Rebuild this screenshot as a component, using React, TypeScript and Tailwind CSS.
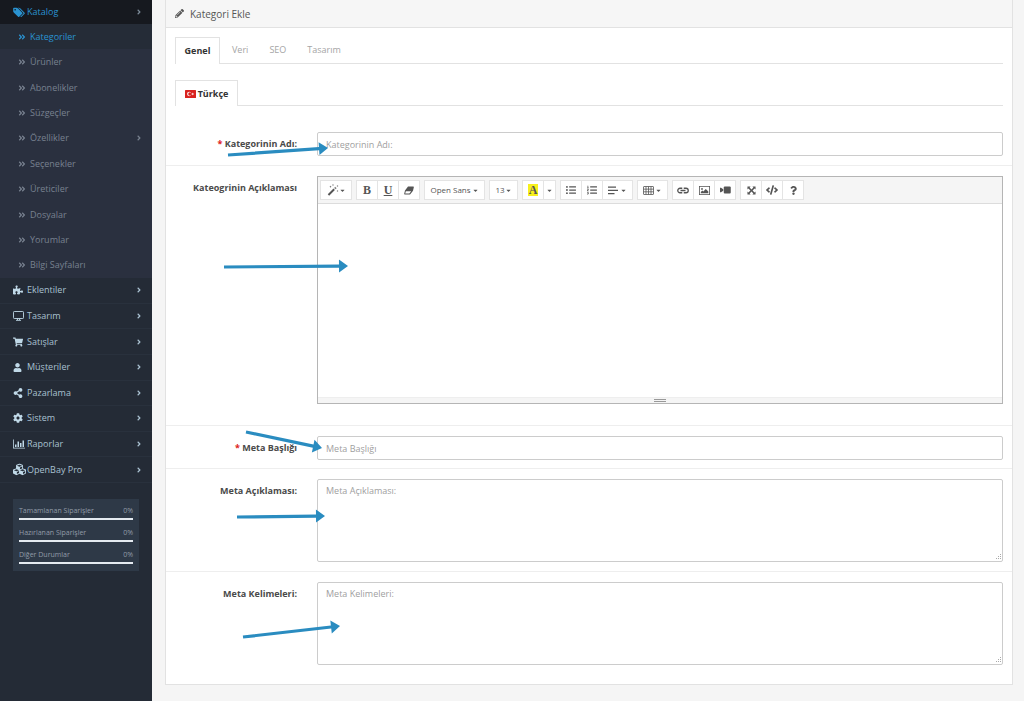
import React from 'react';
import {
  FaAngleDoubleRight,
  FaAngleRight,
  FaCaretDown,
  FaCode,
  FaCog,
  FaCubes,
  FaListOl,
  FaListUl,
  FaPencilAlt,
  FaPuzzlePiece,
  FaQuestion,
  FaShareAlt,
  FaShoppingCart,
  FaUser,
} from 'react-icons/fa';

const TagsIcon = () => (
  <svg viewBox="0 0 1899 1792" className="h-[11px] w-3" fill="currentColor">
    <path d="M448 448q0-53-37.5-90.5T320 320t-90.5 37.5T192 448t37.5 90.5T320 576t90.5-37.5T448 448zm1067 576q0 53-37 90l-491 492q-39 37-91 37-53 0-90-37L91 890q-38-37-64.5-101T0 672V256q0-52 38-90t90-38h416q53 0 117 26.5T763 219l715 714q37 39 37 91zm384 0q0 53-37 90l-491 492q-39 37-91 37-36 0-59-14t-53-45l470-470q37-37 37-90 0-52-37-91L923 219q-38-38-102-64.5T704 128h224q53 0 117 26.5t102 64.5l715 714q37 39 37 91z" />
  </svg>
);

const DesktopIcon = () => (
  <svg viewBox="0 0 22 20" className="h-[10px] w-[11px]" fill="none" stroke="currentColor" strokeWidth="1.8">
    <rect x="1" y="1" width="20" height="14" rx="1.5" />
    <path d="M9 15v3M13 15v3M6 18.7h10" />
  </svg>
);

const ChartIcon = () => (
  <svg viewBox="0 0 24 20" className="h-[10px] w-3" fill="currentColor">
    <path d="M0 1h1.6v16.4H24V19H0zM4 11h3v5H4zM9 5h3v11H9zM14 8h3v8h-3zM19 3h3v13h-3z" />
  </svg>
);

const MagicIcon = () => (
  <svg viewBox="0 0 24 24" className="h-3 w-3" fill="currentColor">
    <path d="M1.500 20.500L13 9l2.800 2.800L4.300 23.300z" />
    <path d="M14.200 7.800L16.500 5.500l2.800 2.800L17 10.600z" opacity=".75" />
    <path d="M7 3l.7 1.800 1.800.7-1.800.7L7 8l-.7-1.800-1.800-.7 1.800-.7zM12 0l.6 1.400L14 2l-1.400.6L12 4l-.6-1.400L10 2l1.400-.6zM21 2l.6 1.400 1.400.6-1.400.6L21 6l-.6-1.400L19 4l1.400-.6zM21 12l.6 1.400 1.400.6-1.400.6L21 16l-.6-1.400L19 14l1.400-.6z" />
  </svg>
);

const EraserIcon = () => (
  <svg viewBox="0 0 20 18" className="h-[9px] w-[10px]" fill="currentColor">
    <path fillRule="evenodd" d="M8 1h10.500q1.500 0 1.200 1.500L18 9.500 12.500 16.500q-.5.500-1.500.500H1.500Q0 17 .4 15.500L2 9zM3.700 10.500L2.400 15.200h8.300l3.700-4.700z" />
  </svg>
);

const LinkIcon = () => (
  <svg viewBox="0 0 24 14" className="h-[7px] w-3" fill="none" stroke="currentColor" strokeWidth="2.600">
    <path d="M10.500 11.500H6a4.500 4.500 0 0 1 0-9h4.500M13.500 2.500H18a4.500 4.500 0 0 1 0 9h-4.500M7 7h10" />
  </svg>
);

const VideoIcon = () => (
  <svg viewBox="0 0 22 16" className="h-2 w-[11px]" fill="currentColor">
    <rect x="7.500" y="1" width="14" height="14" rx="2" />
    <path d="M0 3.500h2l4.500 3v3l-4.500 3H0z" />
  </svg>
);

const AlignIcon = () => (
  <svg viewBox="0 0 20 18" className="h-[9px] w-[10px]" fill="currentColor">
    <path d="M0 1h16v2.4H0zM0 7.5h20v2.4H0zM0 14h13v2.4H0z" />
  </svg>
);

const TableIcon = () => (
  <svg viewBox="0 0 22 18" className="h-[9px] w-[11px]" fill="none" stroke="currentColor" strokeWidth="1.6">
    <rect x="1" y="1" width="20" height="16" rx="1" />
    <path d="M1 6.3h20M1 11.6h20M6 1v16M11 1v16M16 1v16" />
  </svg>
);

const PictureIcon = () => (
  <svg viewBox="0 0 22 18" className="h-[9px] w-[11px]" fill="currentColor">
    <path fillRule="evenodd" d="M0 0h22v18H0zM1.6 1.6v14.8h18.8V1.6z" />
    <circle cx="6" cy="5.8" r="1.9" />
    <path d="M3.6 14.5v-2.6l3-3 2 2 5-5 5 5v3.6z" />
  </svg>
);

const ExpandIcon = () => (
  <svg viewBox="0 0 20 20" className="h-[9px] w-[9px]" fill="currentColor">
    <path d="M1 1h7L5.8 3.2 10 7.6l4.2-4.4L12 1h7v7l-2.2-2.2L12.4 10l4.4 4.2L19 12v7h-7l2.2-2.2L10 12.4l-4.2 4.4L8 19H1v-7l2.2 2.2L7.6 10 3.2 5.8 1 8z" />
  </svg>
);

const FlagIcon = () => (
  <svg viewBox="0 0 22 16" className="h-2 w-[11px]">
    <rect width="22" height="16" rx="1" fill="#d9221f" />
    <circle cx="8.5" cy="8" r="4.3" fill="#fff" />
    <circle cx="9.8" cy="8" r="3.4" fill="#d9221f" />
    <path d="M12 8l2.2-.7V5l1.4 1.9 2.2-.7L16.4 8l1.4 1.8-2.2-.7L14.2 11V8.7z" fill="#fff" />
  </svg>
);

const subItems = [
  { label: 'Kategoriler', active: true },
  { label: 'Ürünler' },
  { label: 'Abonelikler' },
  { label: 'Süzgeçler' },
  { label: 'Özellikler', more: true },
  { label: 'Seçenekler' },
  { label: 'Üreticiler' },
  { label: 'Dosyalar' },
  { label: 'Yorumlar' },
  { label: 'Bilgi Sayfaları' },
];

const menuItems = [
  { label: 'Eklentiler', icon: <FaPuzzlePiece size={10} /> },
  { label: 'Tasarım', icon: <DesktopIcon /> },
  { label: 'Satışlar', icon: <FaShoppingCart size={10} /> },
  { label: 'Müşteriler', icon: <FaUser size={9} /> },
  { label: 'Pazarlama', icon: <FaShareAlt size={10} /> },
  { label: 'Sistem', icon: <FaCog size={10} /> },
  { label: 'Raporlar', icon: <ChartIcon /> },
  { label: 'OpenBay Pro', icon: <FaCubes size={13} /> },
];

const stats = ['Tamamlanan Siparişler', 'Hazırlanan Siparişler', 'Diğer Durumlar'];

const Sidebar = () => (
  <aside className="w-[152px] shrink-0 bg-[#242b36] text-[9px] leading-3">
    <nav>
      <a href="#katalog" className="flex h-6 items-center bg-[#16191f] pl-[13px] pr-[9px] text-[#2a93d1]">
        <span className="w-[14px]">
          <TagsIcon />
        </span>
        <span className="grow">Katalog</span>
        <FaAngleRight size={8} className="text-[#7c8b99]" />
      </a>
      <ul className="flex h-[254px] flex-col bg-[#2a303f]">
        {subItems.map((item) => (
          <li key={item.label} className="flex-1">
            <a
              href="#"
              className={`flex h-full items-center pl-[18px] pr-[9px] ${
                item.active ? 'bg-[#252c37] text-[#2a93d1]' : 'text-[#78818f]'
              }`}
            >
              <FaAngleDoubleRight size={8} className="mr-1 w-2" />
              <span className="grow">{item.label}</span>
              {item.more && <FaAngleRight size={8} />}
            </a>
          </li>
        ))}
      </ul>
      <ul className="flex h-[205px] flex-col">
        {menuItems.map((item) => (
          <li key={item.label} className="flex-1 border-b border-[#29313d]">
            <a href="#" className="flex h-full items-center pl-[13px] pr-[9px] text-[#a9c1d1]">
              <span className="w-[14px] text-[#c0d9e8]">{item.icon}</span>
              <span className="grow">{item.label}</span>
              <FaAngleRight size={8} />
            </a>
          </li>
        ))}
      </ul>
    </nav>
    <div className="mx-[13px] mt-4 h-[72px] bg-[#2e3947] px-[6px] pt-[6px] text-[7px] text-[#929ca8]">
      {stats.map((label) => (
        <div key={label} className="h-[22px]">
          <div className="flex justify-between">
            <span>{label}</span>
            <span>0%</span>
          </div>
          <div className="mt-px h-[2px] bg-[#e4eaf0]" />
        </div>
      ))}
    </div>
  </aside>
);

type ToolProps = { title: string; className: string; children: React.ReactNode };

const Tool = ({ title, className, children }: ToolProps) => (
  <button
    type="button"
    title={title}
    className={`flex h-full items-center justify-center border-r border-[#e4e4e4] last:border-r-0 ${className}`}
  >
    {children}
  </button>
);

const Group = ({ children }: { children: React.ReactNode }) => (
  <div className="flex h-5 border border-[#e4e4e4] bg-white">{children}</div>
);

const Toolbar = () => (
  <div className="flex h-[27px] items-center gap-1 border-b border-[#dcdcdc] bg-[#f5f5f5] px-[2px] text-[8px] text-[#555]">
    <Group>
      <Tool title="Stil" className="w-[30px]">
        <MagicIcon />
        <FaCaretDown size={7} />
      </Tool>
    </Group>
    <Group>
      <Tool title="Kalın" className="w-[21px] font-['Liberation_Serif',serif] text-[12px] font-bold">B</Tool>
      <Tool title="Altı çizili" className="w-[21px] font-['Liberation_Serif',serif] text-[12px] font-bold underline">U</Tool>
      <Tool title="Temizle" className="w-5">
        <EraserIcon />
      </Tool>
    </Group>
    <Group>
      <Tool title="Yazı tipi" className="w-[59px] gap-px">
        Open Sans <FaCaretDown size={7} />
      </Tool>
    </Group>
    <Group>
      <Tool title="Yazı boyutu" className="w-[27px]">
        13
        <FaCaretDown size={7} />
      </Tool>
    </Group>
    <Group>
      <Tool title="Renk" className="w-[21px]">
        <span className="bg-[#f7f01c] px-px font-['Liberation_Serif',serif] text-[12px] font-bold leading-3">A</span>
      </Tool>
      <Tool title="Diğer renkler" className="w-[11px]">
        <FaCaretDown size={7} />
      </Tool>
    </Group>
    <Group>
      <Tool title="Madde listesi" className="w-[21px]">
        <FaListUl size={10} />
      </Tool>
      <Tool title="Numaralı liste" className="w-[21px]">
        <FaListOl size={10} />
      </Tool>
      <Tool title="Paragraf" className="w-[29px] gap-[2px]">
        <AlignIcon />
        <FaCaretDown size={7} />
      </Tool>
    </Group>
    <Group>
      <Tool title="Tablo" className="w-[29px] gap-px">
        <TableIcon />
        <FaCaretDown size={7} />
      </Tool>
    </Group>
    <Group>
      <Tool title="Bağlantı" className="w-[21px]">
        <LinkIcon />
      </Tool>
      <Tool title="Resim" className="w-[21px]">
        <PictureIcon />
      </Tool>
      <Tool title="Video" className="w-5">
        <VideoIcon />
      </Tool>
    </Group>
    <Group>
      <Tool title="Tam ekran" className="w-[21px]">
        <ExpandIcon />
      </Tool>
      <Tool title="Kod" className="w-[21px]">
        <FaCode size={12} />
      </Tool>
      <Tool title="Yardım" className="w-5">
        <FaQuestion size={9} />
      </Tool>
    </Group>
  </div>
);

type ArrowProps = { x1: number; y1: number; x2: number; y2: number };

// Points are relative to the top left corner of the form row.
const Arrow = ({ x1, y1, x2, y2 }: ArrowProps) => {
  const length = Math.hypot(x2 - x1, y2 - y1);
  const angle = (Math.atan2(y2 - y1, x2 - x1) * 180) / Math.PI;
  return (
    <svg className="pointer-events-none absolute left-0 top-0 z-10 h-px w-px overflow-visible" fill="#2a8cc0">
      <path
        transform={`translate(${x1} ${y1}) rotate(${angle})`}
        d={`M0-1.6H${length - 9}V-6.5L${length} 0L${length - 9} 6.5V1.6H0z`}
      />
    </svg>
  );
};

type RowProps = {
  id: string;
  label: string;
  required?: boolean;
  last?: boolean;
  arrow: ArrowProps;
  className?: string;
  children: React.ReactNode;
};

const FormRow = ({ id, label, required, last, arrow, className = '', children }: RowProps) => (
  <div className={`relative flex px-[9px] pt-[10px] ${last ? '' : 'border-b border-[#eee]'} ${className}`}>
    <label htmlFor={id} className="mr-5 w-[122px] shrink-0 pt-[6px] text-right font-bold text-[#4a4a4a]">
      {required && <span className="text-[#d22]">* </span>}
      {label}
    </label>
    <div className="min-w-0 grow">{children}</div>
    <Arrow {...arrow} />
  </div>
);

const fieldClass =
  'block w-full rounded-[2px] border border-[#ccc] bg-white px-2 text-[#555] outline-none placeholder:text-[#a0a0a0]';

const MetaArea = ({ id, placeholder }: { id: string; placeholder: string }) => (
  <div className="relative">
    <textarea id={id} placeholder={placeholder} className={`${fieldClass} h-[83px] resize-none pt-[5px]`} />
    <svg viewBox="0 0 6 6" className="absolute bottom-[2px] right-[2px] h-[6px] w-[6px]" fill="#aaa">
      <path d="M5 0h1v1H5zM3 2h1v1H3zM5 2h1v1H5zM1 4h1v1H1zM3 4h1v1H3zM5 4h1v1H5z" />
    </svg>
  </div>
);

export default function App() {
  return (
    <div className="flex min-h-screen bg-[#f5f5f5] font-['Open_Sans',sans-serif]">
      <Sidebar />
      <main className="min-w-0 grow pb-4 pl-[13px] pr-[11px]">
        <section className="border-x border-b border-[#e2e2e2] bg-white text-[9px] leading-3 text-[#444]">
          <h1 className="flex h-7 items-center gap-[6px] border-b border-[#e2e2e2] bg-[#f6f6f6] pl-[9px] text-[10px] text-[#555]">
            <FaPencilAlt size={9} />
            Kategori Ekle
          </h1>
          <div role="tablist" className="mx-[9px] mt-[9px] flex h-[27px] border-b border-[#e2e2e2]">
            <button type="button" role="tab" aria-selected="true" className="-mb-px w-[45px] border border-b-0 border-[#e2e2e2] bg-white font-bold text-[#333]">
              Genel
            </button>
            <button type="button" role="tab" className="ml-3 text-[#a5a5a5]">Veri</button>
            <button type="button" role="tab" className="ml-[21px] text-[#a5a5a5]">SEO</button>
            <button type="button" role="tab" className="ml-[21px] text-[#a5a5a5]">Tasarım</button>
          </div>
          <div role="tablist" className="mx-[9px] mt-4 flex h-[26px] border-b border-[#e2e2e2]">
            <button
              type="button"
              role="tab"
              aria-selected="true"
              className="-mb-px flex w-[63px] items-center justify-center gap-[2px] border border-b-0 border-[#e2e2e2] bg-white font-bold text-[#333]"
            >
              <FlagIcon />
              Türkçe
            </button>
          </div>
          <form className="pt-4">
            <FormRow id="name" label="Kategorinin Adı:" required arrow={{ x1: 62, y1: 33, x2: 162, y2: 26 }} className="h-[44px]">
              <input id="name" type="text" placeholder="Kategorinin Adı:" className={`${fieldClass} h-6`} />
            </FormRow>
            <FormRow id="description" label="Kateogrinin Açıklaması" arrow={{ x1: 58, y1: 101, x2: 182, y2: 100 }} className="h-[260px]">
              <div className="border border-[#b5b5b5]">
                <Toolbar />
                <textarea id="description" className="block h-[193px] w-full resize-none bg-white p-2 outline-none" />
                <div className="flex h-[6px] items-center justify-center border-t border-[#eee] bg-[#f5f5f5]">
                  <span className="h-[3px] w-3 border-y border-[#999]" />
                </div>
              </div>
            </FormRow>
            <FormRow id="meta-title" label="Meta Başlığı" required arrow={{ x1: 80, y1: 6, x2: 156, y2: 22 }} className="h-[43px]">
              <input id="meta-title" type="text" placeholder="Meta Başlığı" className={`${fieldClass} h-6`} />
            </FormRow>
            <FormRow id="meta-description" label="Meta Açıklaması:" arrow={{ x1: 71, y1: 48, x2: 159, y2: 47 }} className="h-[103px]">
              <MetaArea id="meta-description" placeholder="Meta Açıklaması:" />
            </FormRow>
            <FormRow id="meta-keywords" label="Meta Kelimeleri:" last arrow={{ x1: 77, y1: 65, x2: 174, y2: 54 }} className="h-[112px]">
              <MetaArea id="meta-keywords" placeholder="Meta Kelimeleri:" />
            </FormRow>
          </form>
        </section>
      </main>
    </div>
  );
}
